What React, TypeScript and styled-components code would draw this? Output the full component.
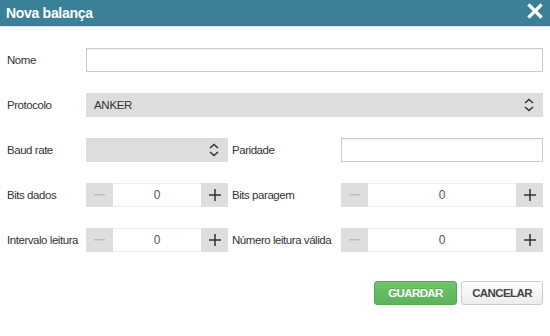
import React from "react";
import styled, { createGlobalStyle } from "styled-components";

const GlobalStyle = createGlobalStyle`
  html, body {
    margin: 0;
    padding: 0;
    background: #ffffff;
    font-family: "Liberation Sans", Arial, sans-serif;
  }
`;

const Dialog = styled.div`
  width: 550px;
  height: 336px;
  background: #fff;
  overflow: hidden;
`;

const Header = styled.div`
  height: 26px;
  background: #3a8098;
  border-bottom: 1px solid #d6e6ec;
  display: flex;
  align-items: center;
  justify-content: space-between;
  padding: 0 7px 0 6px;
`;

const Title = styled.h1`
  margin: 0;
  color: #fff;
  font-size: 14px;
  letter-spacing: -0.3px;
  font-weight: bold;
  line-height: 26px;
`;

const CloseButton = styled.button`
  border: 0;
  background: transparent;
  padding: 0;
  width: 16px;
  height: 16px;
  display: flex;
  margin-top: -4px;
  cursor: pointer;
`;

const Form = styled.div`
  display: grid;
  grid-template-columns: 79px 142px 113px 202px;
  grid-auto-rows: 24px;
  row-gap: 21px;
  padding: 21px 0 0 7px;
  align-items: center;
`;

const Label = styled.label<{ $inner?: boolean }>`
  font-size: 11.5px;
  letter-spacing: -0.45px;
  color: #333;
  padding-left: ${(p) => (p.$inner ? "4px" : "0")};
  white-space: nowrap;
`;

const TextInput = styled.input<{ $wide?: boolean }>`
  grid-column: ${(p) => (p.$wide ? "span 3" : "auto")};
  height: 24px;
  box-sizing: border-box;
  border: 1px solid #cccccc;
  box-shadow: inset 0 1px 1px rgba(0, 0, 0, 0.05);
  font-size: 12px;
  padding: 0 8px;
  outline: none;
`;

const Select = styled.div<{ $wide?: boolean }>`
  grid-column: ${(p) => (p.$wide ? "span 3" : "auto")};
  height: 24px;
  background: #dddddd;
  display: flex;
  align-items: center;
  justify-content: space-between;
  padding: 0 9px 0 8px;
  font-size: 11.5px;
  letter-spacing: -0.3px;
  color: #333;
`;

const Stepper = styled.div`
  height: 24px;
  display: flex;
`;

const StepButton = styled.button<{ $disabled?: boolean }>`
  width: 27px;
  height: 24px;
  border: 0;
  padding: 0;
  background: #dedede;
  color: ${(p) => (p.$disabled ? "#bdbdbd" : "#333")};
  display: flex;
  align-items: center;
  justify-content: center;
`;

const StepValue = styled.div`
  flex: 1;
  height: 24px;
  box-sizing: border-box;
  border-top: 1px solid #eeeeee;
  border-bottom: 1px solid #eeeeee;
  display: flex;
  align-items: center;
  justify-content: center;
  font-size: 12px;
  color: #555;
`;

const Actions = styled.div`
  display: flex;
  justify-content: flex-end;
  gap: 4px;
  padding: 29px 7px 0 0;
`;

const ActionButton = styled.button<{ $primary?: boolean }>`
  width: ${(p) => (p.$primary ? "83px" : "82px")};
  height: 24px;
  box-sizing: border-box;
  padding: 0;
  border-radius: 3px;
  font-family: "Liberation Sans", Arial, sans-serif;
  font-size: 11.5px;
  font-weight: bold;
  letter-spacing: -0.6px;
  border: 1px solid ${(p) => (p.$primary ? "#4cae4c" : "#cccccc")};
  color: ${(p) => (p.$primary ? "#ffffff" : "#444")};
  background: ${(p) =>
    p.$primary
      ? "linear-gradient(#73c26a, #5cb35a)"
      : "linear-gradient(#ffffff, #ececec)"};
  text-shadow: ${(p) => (p.$primary ? "0 -1px 0 rgba(0,0,0,0.15)" : "none")};
`;

const UpDown = () => (
  <svg width="10" height="14" viewBox="0 0 10 14" fill="none">
    <path d="M1 5 L5 1.5 L9 5" stroke="#333" strokeWidth="1.5" />
    <path d="M1 9 L5 12.5 L9 9" stroke="#333" strokeWidth="1.5" />
  </svg>
);

const Minus = () => (
  <svg width="11" height="2" viewBox="0 0 11 2">
    <rect width="11" height="1.5" fill="currentColor" />
  </svg>
);

const Plus = () => (
  <svg width="12" height="12" viewBox="0 0 12 12">
    <rect x="0" y="5.25" width="12" height="1.5" fill="currentColor" />
    <rect x="5.25" y="0" width="1.5" height="12" fill="currentColor" />
  </svg>
);

const NumberStepper = ({ value }: { value: number }) => (
  <Stepper>
    <StepButton $disabled>
      <Minus />
    </StepButton>
    <StepValue>{value}</StepValue>
    <StepButton>
      <Plus />
    </StepButton>
  </Stepper>
);

const App: React.FC = () => {
  return (
    <>
      <GlobalStyle />
      <Dialog>
        <Header>
          <Title>Nova balança</Title>
          <CloseButton aria-label="Fechar">
            <svg width="16" height="16" viewBox="0 0 16 16">
              <path
                d="M2.5 2.5 L13.5 13.5 M13.5 2.5 L2.5 13.5"
                stroke="#fff"
                strokeWidth="3.2"
                strokeLinecap="square"
              />
            </svg>
          </CloseButton>
        </Header>
        <Form>
          <Label>Nome</Label>
          <TextInput $wide />

          <Label>Protocolo</Label>
          <Select $wide>
            <span>ANKER</span>
            <UpDown />
          </Select>

          <Label>Baud rate</Label>
          <Select>
            <span />
            <UpDown />
          </Select>
          <Label $inner>Paridade</Label>
          <TextInput />

          <Label>Bits dados</Label>
          <NumberStepper value={0} />
          <Label $inner>Bits paragem</Label>
          <NumberStepper value={0} />

          <Label>Intervalo leitura</Label>
          <NumberStepper value={0} />
          <Label $inner>Número leitura válida</Label>
          <NumberStepper value={0} />
        </Form>
        <Actions>
          <ActionButton $primary>GUARDAR</ActionButton>
          <ActionButton>CANCELAR</ActionButton>
        </Actions>
      </Dialog>
    </>
  );
};

export default App;
